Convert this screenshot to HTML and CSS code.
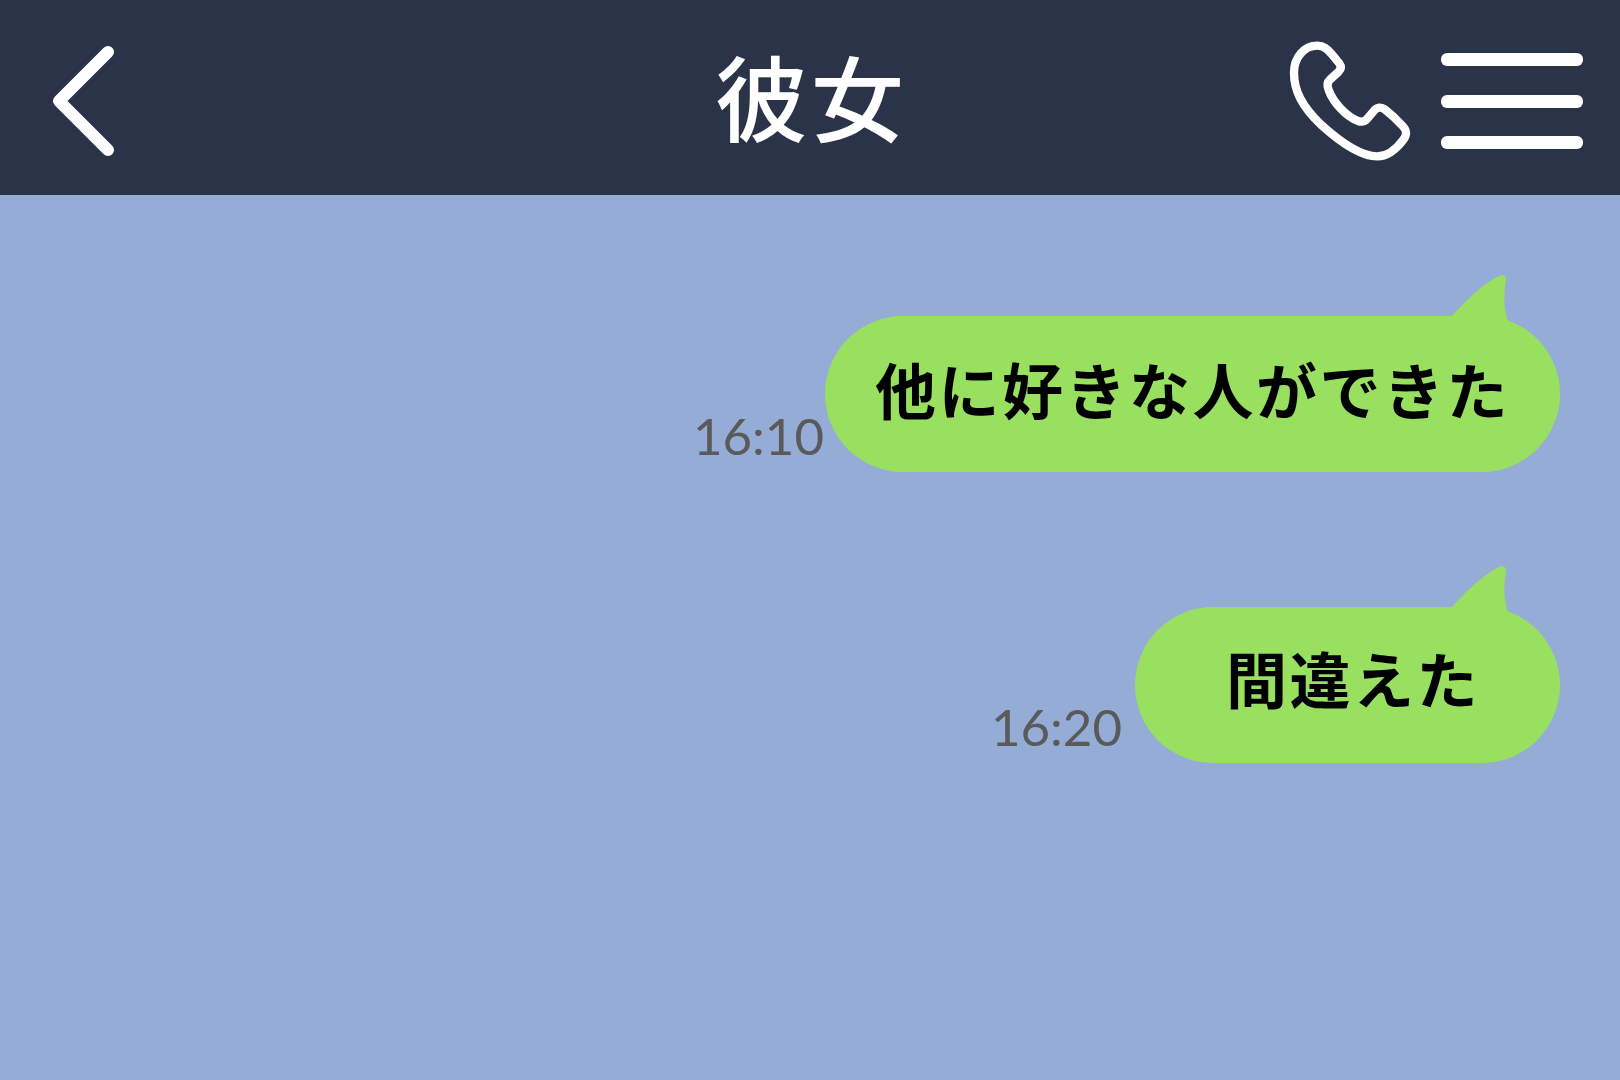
FILE: index.html
```html
<!DOCTYPE html>
<html lang="ja">
<head>
	<meta charset="UTF-8">
	<title>彼女</title>
	<link rel="stylesheet" href="styles.css">
</head>
<body>
	<header class="topbar">
		<div class="topbar-left">
			<svg class="icon-back" viewBox="0 0 70 121"><path d="M58 11L9 60L58 109"/></svg>
		</div>
		<h1 class="title">彼女</h1>
		<div class="topbar-right">
			<svg class="icon-phone" viewBox="0 0 360 360"><path d="M170 79C190 79 200 90 212 103L236 132C243 142 241 150 234 157L208 181C198 190 199 200 204 212C218 250 255 290 292 305C304 309 312 307 319 299L341 273C350 263 362 262 372 270C390 284 410 303 426 320C439 334 440 345 428 361C410 385 385 411 350 411C300 411 235 365 180 315C125 262 100 215 100 160C100 115 130 79 170 79Z" transform="translate(-70 -50)"/></svg>
			<div class="menu">
				<span></span>
				<span></span>
				<span></span>
			</div>
		</div>
	</header>

	<main class="chat">
		<div class="msg">
			<span class="time">16:10</span>
			<div class="bubble">
				<svg class="tail" viewBox="0 0 60 50"><path d="M0 44C14 28 34 10 47 4C51 2 55 4 54 9C52 20 51 34 56 50L0 50Z"/></svg>
				他に好きな人ができた
			</div>
		</div>
		<div class="msg">
			<span class="time">16:20</span>
			<div class="bubble bubble-short">
				<svg class="tail" viewBox="0 0 60 50"><path d="M0 44C14 28 34 10 47 4C51 2 55 4 54 9C52 20 51 34 56 50L0 50Z"/></svg>
				間違えた
			</div>
		</div>
	</main>
</body>
</html>
```

FILE: styles.css
```css
html,body{margin:0;padding:0;}
body{width:1620px;height:1080px;overflow:hidden;background:#95acd6;font-family:"Noto Sans CJK JP","Noto Sans",sans-serif;}

.topbar{height:195px;background:#2a3348;display:grid;grid-template-columns:1fr auto 1fr;align-items:center;}
.topbar-left{padding:7px 0 0 50px;display:flex;align-items:center;}
.topbar-right{display:flex;justify-content:flex-end;align-items:center;padding-right:37px;}
.title{margin:0 0 7px;padding-left:2px;color:#fff;font-size:93px;font-weight:500;line-height:1;letter-spacing:3px;}

.icon-back{width:70px;height:121px;}
.icon-back path{fill:none;stroke:#fff;stroke-width:12px;stroke-linecap:round;stroke-linejoin:round;}
.icon-phone{width:120px;height:120px;margin:0 37px 4px 0;overflow:visible;}
.icon-phone path{fill:none;stroke:#fff;stroke-width:25px;stroke-linejoin:round;}
.menu{width:142px;margin-top:7px;display:flex;flex-direction:column;gap:28.500px;}
.menu span{display:block;height:13px;border-radius:6px;background:#fff;}

.chat{display:flex;flex-direction:column;align-items:flex-end;gap:135px;padding:121px 60px 0 0;}
.msg{display:flex;align-items:flex-end;}
.time{font-family:Lato,"Noto Sans CJK JP",sans-serif;font-size:51px;font-weight:400;color:#5a5a5a;line-height:1;padding:0 1px 11px 0;}
.bubble{position:relative;height:156px;box-sizing:border-box;padding:0 50px 0 50px;border-radius:78px;background:#9ae060;color:#000;font-size:61px;font-weight:700;line-height:146px;letter-spacing:2.500px;white-space:nowrap;}
.bubble-short{padding:0 80px 0 91px;margin-left:12px;line-height:141px;}
.tail{position:absolute;top:-44px;right:48px;width:60px;height:50px;}
.tail path{fill:#9ae060;}
```
